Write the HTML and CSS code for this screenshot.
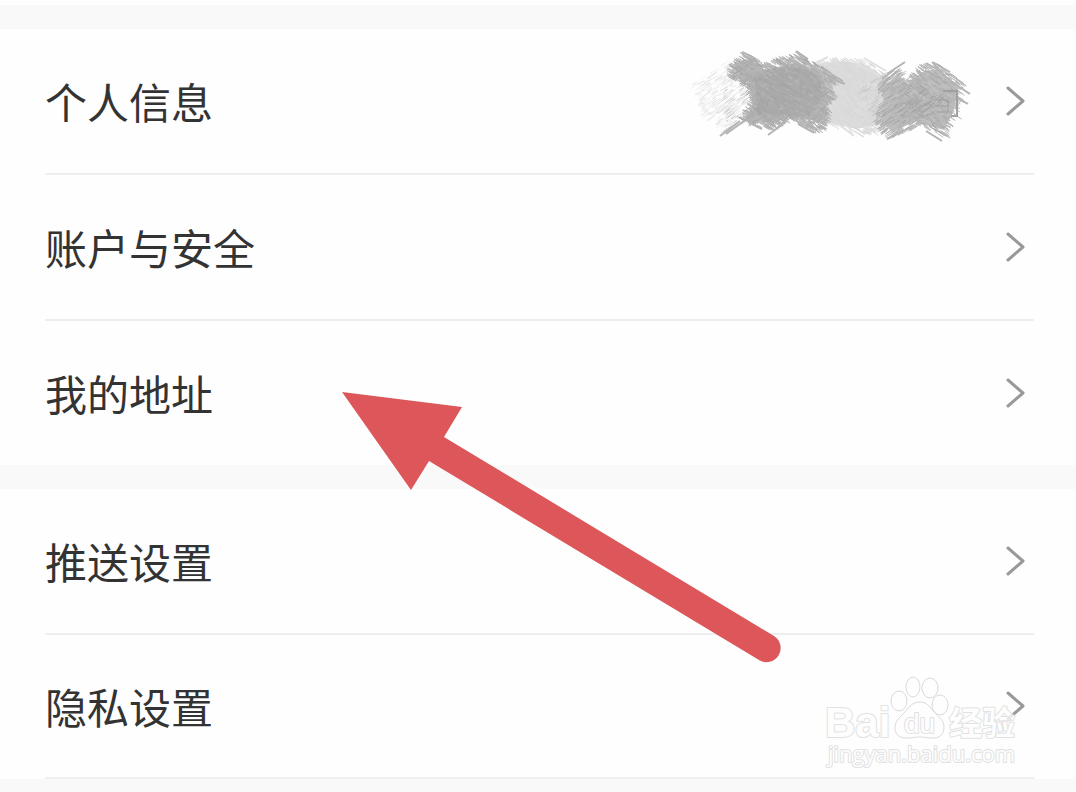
FILE: index.html
```html
<!DOCTYPE html>
<html lang="zh-CN">
<head>
    <meta charset="utf-8">
    <title>设置</title>
    <link rel="stylesheet" href="styles.css">
</head>
<body>
    <main class="settings">
        <nav class="group">
            <a class="row" href="#">
                <span class="label">个人信息</span>
                <svg class="scribble" id="scribble" width="340" height="130" viewBox="0 6 340 130" aria-hidden="true"></svg>
                <svg class="chevron" width="20" height="32" viewBox="0 0 20 32"><path d="M2 3 L17 16 L2 29"/></svg>
            </a>
            <a class="row" href="#">
                <span class="label">账户与安全</span>
                <svg class="chevron" width="20" height="32" viewBox="0 0 20 32"><path d="M2 3 L17 16 L2 29"/></svg>
            </a>
            <a class="row" href="#">
                <span class="label">我的地址</span>
                <svg class="chevron" width="20" height="32" viewBox="0 0 20 32"><path d="M2 3 L17 16 L2 29"/></svg>
            </a>
        </nav>

        <nav class="group group-lined">
            <a class="row" href="#">
                <span class="label">推送设置</span>
                <svg class="chevron" width="20" height="32" viewBox="0 0 20 32"><path d="M2 3 L17 16 L2 29"/></svg>
            </a>
            <a class="row" href="#">
                <span class="label">隐私设置</span>
                <svg class="chevron" width="20" height="32" viewBox="0 0 20 32"><path d="M2 3 L17 16 L2 29"/></svg>
            </a>
        </nav>

        <!-- Arrow pointing at the address row -->
        <svg class="arrow" width="440" height="272" viewBox="0 0 440 272" aria-hidden="true">
            <path d="M0 0 L120 15 L102 45 L432 244 A14 14 0 0 1 417 268 L87 69 L69 98 Z"/>
        </svg>

        <!-- Watermark -->
        <svg class="watermark" width="200" height="100" viewBox="0 0 200 100">
            <text class="mark-latin" x="1" y="61" font-size="42">Bai</text>
            <ellipse cx="75" cy="25" rx="8" ry="10"/>
            <ellipse cx="89" cy="11" rx="7" ry="10"/>
            <ellipse cx="106" cy="12" rx="8" ry="10"/>
            <ellipse cx="116" cy="29" rx="8" ry="10"/>
            <path d="M96 26 C87 26 84 33 79 38 C74 43 71 46 71 52 C71 59 76 62 82 62 C88 62 91 61 96 61 C101 61 104 62 109 62 C116 62 120 58 120 51 C120 45 116 42 112 38 C107 33 104 26 96 26 Z"/>
            <text class="mark-du" x="80" y="57" font-size="28">du</text>
            <text class="mark-cjk" x="125" y="59" font-size="33">经验</text>
            <text class="mark-url" x="4" y="86" font-size="22">jingyan.baidu.com</text>
        </svg>
    </main>

    <script src="script.js"></script>
</body>
</html>
```
FILE: styles.css
```css
body {
    margin: 0;
    background-color: #f9f9f9;
    font-family: "Noto Sans CJK SC", sans-serif;
    color: #333;
}

.settings {
    position: relative;
    display: flex;
    flex-direction: column;
    gap: 24px;
    border-top: 5px solid #fefefe;
    padding-top: 24px;
    overflow: hidden;
}

.group {
    background-color: #fefefe;
    padding: 0 42px 0 45px;
}

.row {
    display: flex;
    align-items: center;
    height: 144px;
    border-bottom: 2px solid #eee;
    color: inherit;
    text-decoration: none;
}

.row:last-child {
    border-bottom: none;
}

.group-lined .row:last-child {
    box-sizing: border-box;
    border-bottom: 2px solid #eee;
}

.label {
    flex: 1;
    font-size: 42px;
    line-height: 60px;
}

.chevron {
    margin-right: 8px;
    fill: none;
    stroke: #999;
    stroke-width: 3;
    stroke-linecap: round;
    stroke-linejoin: round;
}

.scribble {
    margin-right: 16px;
    fill: none;
}

.arrow {
    position: absolute;
    left: 342px;
    top: 387px;
    fill: #dc565a;
}

.watermark {
    position: absolute;
    right: 52px;
    top: 671px;
    fill: #fefefe;
    stroke: #d2d2d2;
    stroke-width: 1;
    stroke-linejoin: round;
    opacity: 0.8;
}

.watermark text {
    paint-order: stroke;
    stroke: #dadada;
    stroke-width: 2;
}

.mark-latin {
    font-family: "Liberation Sans", sans-serif;
    font-weight: bold;
}

.mark-du {
    font-family: "Liberation Sans", sans-serif;
}

.mark-cjk {
    font-family: "Noto Sans CJK SC", sans-serif;
    font-weight: bold;
}

.mark-url {
    font-family: "Open Sans", sans-serif;
}
```
FILE: script.js
```
// Crayon patches that hide the user name
var svg = document.getElementById("scribble");
var seed = 7;

function random() {
    seed = (seed * 16807) % 2147483647;
    return seed / 2147483647;
}

function addPath(d, color, width, fill) {
    var path = document.createElementNS("http://www.w3.org/2000/svg", "path");
    path.setAttribute("d", d);
    path.setAttribute("stroke", color);
    path.setAttribute("stroke-width", width);
    path.setAttribute("fill", fill || "none");
    svg.appendChild(path);
}

function inside(x, y, points) {
    var hit = false;
    for (var i = 0, j = points.length - 1; i < points.length; j = i++) {
        var a = points[i], b = points[j];
        if ((a[1] > y) !== (b[1] > y) && x < (b[0] - a[0]) * (y - a[1]) / (b[1] - a[1]) + a[0]) {
            hit = !hit;
        }
    }
    return hit;
}

// slope: 1 strokes fall to the right, -1 they rise
function scribble(points, count, shade, spread, slope, width) {
    for (var i = 0; i < count; i++) {
        var x = random() * 340;
        var y = random() * 130;
        var dx = 1 + random() * 3;
        var dy = dx * 0.65 * slope;
        var gray = Math.round(shade + (random() - 0.5) * spread);
        if (inside(x, y, points)) {
            addPath("M" + (x - dx) + " " + (y - dy) + " L" + (x + dx) + " " + (y + dy),
                "rgb(" + gray + "," + gray + "," + gray + ")", width);
        }
    }
}

// Light patch on the left
scribble([[42, 55], [78, 31], [100, 50], [100, 80], [74, 101], [54, 86]], 5000, 236, 22, -1, 1);
scribble([[72, 60], [105, 50], [105, 90], [72, 103], [78, 84]], 3000, 220, 40, -1, 1);

// Light patch in the middle
addPath("M165 34 L192 31 L214 34 L236 48 L234 94 L206 99 L165 90 Z", "none", 1, "#dadada");
scribble([[165, 32], [180, 27], [192, 28], [215, 30], [240, 46], [236, 98], [222, 104], [204, 103], [190, 98], [165, 92]], 7000, 220, 12, 1, 1);
scribble([[208, 60], [235, 43], [242, 90], [222, 85]], 3500, 206, 24, -1, 1);

// First dark patch
addPath("M84 38 L95 29 L116 40 L148 32 L168 42 L178 58 L172 92 L140 86 L122 94 L96 88 L104 72 L98 52 Z", "none", 1, "#b4b4b4");
scribble([[78, 40], [95, 23], [117, 34], [132, 28], [149, 24], [170, 35], [192, 50], [181, 56], [185, 66], [179, 76], [178, 90], [172, 100], [162, 102], [140, 90], [122, 99], [110, 97], [90, 89], [102, 72], [98, 56], [80, 48]], 16000, 178, 24, 1, 1);
scribble([[80, 42], [95, 30], [118, 40], [140, 32], [160, 50], [178, 66], [176, 92], [140, 88], [122, 97], [94, 92], [104, 72]], 4000, 174, 18, -1, 1);
scribble([[104, 46], [120, 40], [150, 38], [168, 46], [172, 64], [158, 84], [108, 88]], 6000, 169, 8, 1, 2);

// Second dark patch
addPath("M234 56 L248 44 L258 54 L274 41 L290 39 L308 58 L304 80 L294 100 L266 91 L242 102 L232 92 Z", "none", 1, "#bebebe");
scribble([[229, 54], [249, 39], [258, 50], [270, 46], [276, 70], [270, 96], [240, 108], [229, 99], [224, 86], [234, 68]], 10000, 182, 32, -1, 1);
scribble([[258, 50], [272, 35], [288, 34], [316, 55], [312, 60], [314, 72], [306, 76], [309, 86], [302, 94], [296, 108], [266, 94], [255, 80]], 10000, 182, 32, 1, 1);
scribble([[240, 66], [258, 55], [280, 56], [292, 70], [284, 84], [262, 90], [244, 84]], 3500, 170, 18, -1, 1);

// Loose tails along the edges
addPath("M70 106 L90 91 M76 104 L94 91 M118 105 L136 92 M126 99 L136 90 M148 94 L164 103 M92 22 L104 28 M146 21 L158 29 M178 47 L195 54 M98 92 L112 99", "#b4b4b4", 2);
addPath("M237 44 L255 32 M232 49 L244 40 M228 60 L236 52 M282 32 L300 42 M276 33 L292 42 M302 52 L320 64 M308 68 L318 74 M237 109 L254 100 M276 101 L292 111", "#b4b4b4", 2);
addPath("M178 27 L166 33 M200 29 L230 47 M214 28 L236 41 M186 92 L204 106 M204 101 L214 107", "#e0e0e0", 2);

// What still shows of the last character
addPath("M293 61 H307 V86 H301", "#a0a0a0", 2);
addPath("M284 70 H298 V82 H286 M286 76 H298", "#a0a0a0", 1);
```
